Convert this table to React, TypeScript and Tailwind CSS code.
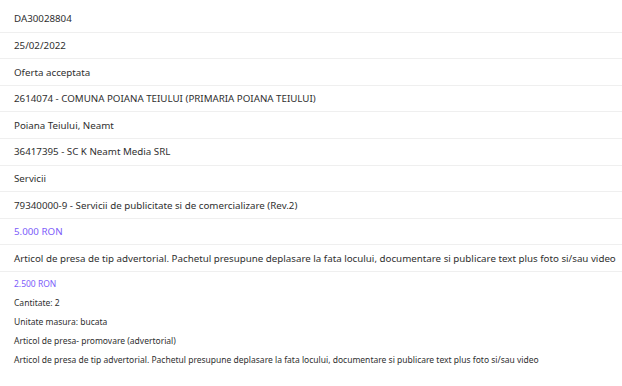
import React from 'react';

const rows: {text: string; accent?: boolean}[] = [
    {text: 'DA30028804'},
    {text: '25/02/2022'},
    {text: 'Oferta acceptata'},
    {text: '2614074 - COMUNA POIANA TEIULUI (PRIMARIA POIANA TEIULUI)'},
    {text: 'Poiana Teiului, Neamt'},
    {text: '36417395 - SC K Neamt Media SRL'},
    {text: 'Servicii'},
    {text: '79340000-9 - Servicii de publicitate si de comercializare (Rev.2)'},
    {text: '5.000 RON', accent: true},
    {text: 'Articol de presa de tip advertorial. Pachetul presupune deplasare la fata locului, documentare si publicare text plus foto si/sau video'},
];

const items: {text: string; accent?: boolean}[] = [
    {text: '2.500 RON', accent: true},
    {text: 'Cantitate: 2'},
    {text: 'Unitate masura: bucata'},
    {text: 'Articol de presa- promovare (advertorial)'},
    {text: 'Articol de presa de tip advertorial. Pachetul presupune deplasare la fata locului, documentare si publicare text plus foto si/sau video'},
];

export default function App() {
    return (
        <div className="w-[622px] h-[386px] bg-white text-[#2f2f2f] overflow-hidden pt-[6px]" style={{fontFamily: '"Noto Sans", sans-serif'}}>
            {/* Champs principaux */}
            {rows.map((row, i) => (
                <div
                    key={i}
                    className={`h-[26.6px] flex items-center pt-[2px] px-[14px] text-[9.75px] whitespace-nowrap border-b border-[#efefef] ${row.accent ? 'text-[#7c5cfa]' : ''}`}
                >
                    {row.text}
                </div>
            ))}

            {/* Articole */}
            <div className="px-[14px] pt-[3px]">
                {items.map((item, i) => (
                    <div
                        key={i}
                        className={`h-[19px] flex items-center text-[8.5px] whitespace-nowrap ${item.accent ? 'text-[#7c5cfa]' : ''}`}
                    >
                        {item.text}
                    </div>
                ))}
            </div>
        </div>
    );
}
